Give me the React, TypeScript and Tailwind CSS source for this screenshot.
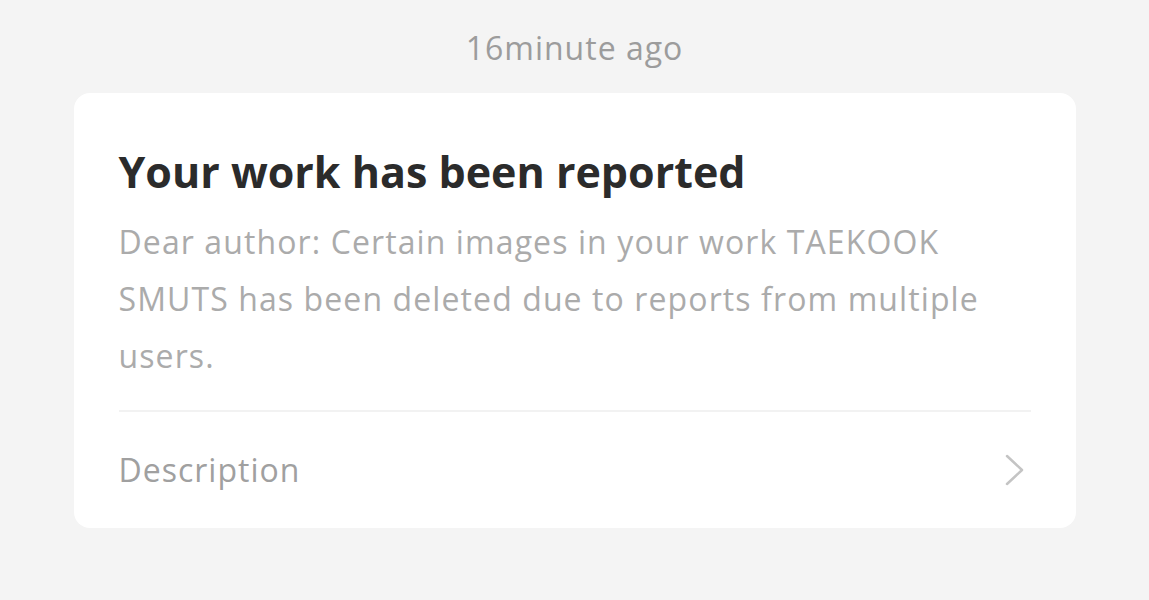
import React from 'react';

const App: React.FC = () => {
  return (
    <div className="w-[1149px] h-[600px] bg-[#f4f4f4] flex flex-col items-center font-['Open_Sans','Noto_Sans',sans-serif]">
      <div className="pt-[28px] h-[93px] text-[32px] leading-[40px] tracking-[1px] text-[#9c9c9c]">16minute ago</div>
      <div className="w-[1002px] bg-white rounded-[16px] px-[45px] pt-[53px]">
        <h2 className="text-[43px] leading-[52px] font-bold text-[#2b2b2b]">Your work has been reported</h2>
        <p className="mt-[15px] text-[32px] leading-[57px] tracking-[1.1px] text-[#ababab]">
          Dear author: Certain images in your work TAEKOOK SMUTS has been deleted due to reports from multiple users.
        </p>
        <div className="mt-[26px] h-[2px] bg-[#f2f2f2]" />
        <div className="h-[116px] flex items-center justify-between">
          <span className="text-[32px] tracking-[1px] text-[#a0a0a0]">Description</span>
          <svg width="22" height="34" viewBox="0 0 22 34" fill="none" className="mr-[5px]">
            <path d="M3 3 L18 17 L3 31" stroke="#c4c4c4" strokeWidth="2.5" strokeLinecap="round" strokeLinejoin="round" />
          </svg>
        </div>
      </div>
    </div>
  );
};

export default App;
